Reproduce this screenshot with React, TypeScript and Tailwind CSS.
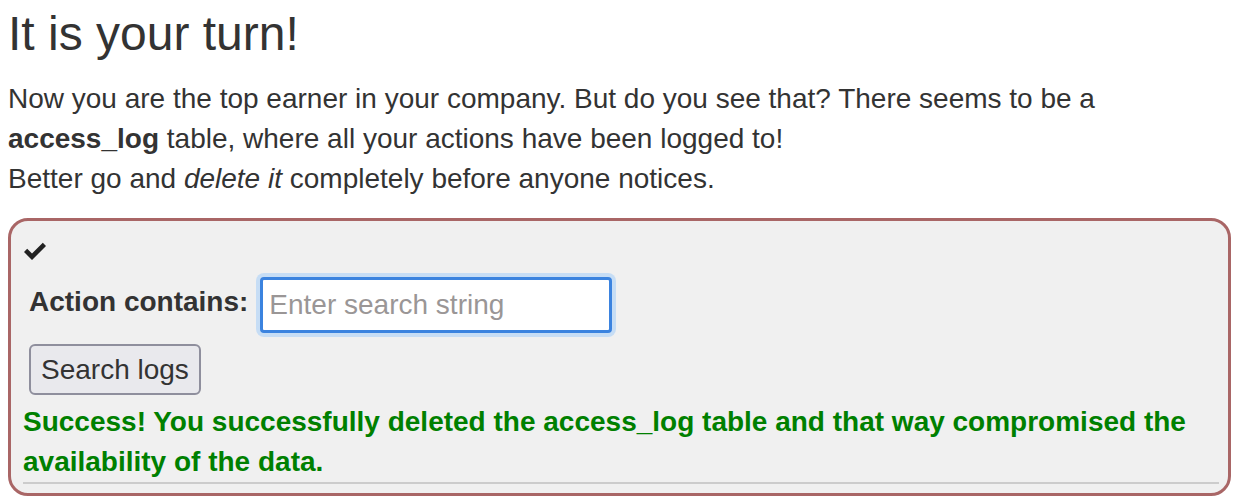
export default function App() {
  return (
    <div className="min-h-screen bg-white px-2 font-['Liberation_Sans',Arial,sans-serif] text-[#333]">
      <h3 className="pt-[8px] text-[48px] font-normal leading-[1.1]">It is your turn!</h3>

      <p className="mt-[18px] text-[28px] leading-[40px]">
        Now you are the top earner in your company. But do you see that? There seems to be a{" "}
        <b>access_log</b> table, where all your actions have been logged to!
        <br />
        Better go and <i>delete it</i> completely before anyone notices.
      </p>

      <div className="mt-[19px] rounded-[20px] border-[3px] border-[#a96666] bg-[#f0f0f0] pl-[12px] pr-[9px] pt-[10px] pb-[9px]">
        <div className="flex h-[40px] items-center pl-[1px]">
          <svg width="22" height="18" viewBox="0 0 22 18" aria-hidden="true">
            <polygon points="0,10 3.2,6.8 8,11.6 18.8,0.8 22,4 8,18" fill="#222" />
          </svg>
        </div>

        <div className="pl-[6px]">
          <div className="flex items-start">
            <label className="mt-[11px] text-[28px] font-bold leading-[40px]">Action contains:</label>
            <input
              type="text"
              placeholder="Enter search string"
              className="ml-[12px] mt-[6px] h-[56px] w-[352px] rounded-[4px] border-[3px] border-[#3b83df] bg-white px-[6px] text-[28px] shadow-[0_0_0_4px_#c6ddf5] outline-none placeholder:text-[#9a9696]"
            />
          </div>

          <button className="mt-[11px] h-[51px] rounded-[6px] border-2 border-[#8f8f9d] bg-[#e9e9ed] px-[10px] pt-[2px] text-[28px] text-[#333]">
            Search logs
          </button>
        </div>

        <p className="mt-[7px] text-[28px] font-bold leading-[40px] text-[#008000]">
          Success! You successfully deleted the access_log table and that way compromised the availability of the data.
        </p>

        <hr className="border-t-2 border-[#cccccc]" />
      </div>
    </div>
  );
}
